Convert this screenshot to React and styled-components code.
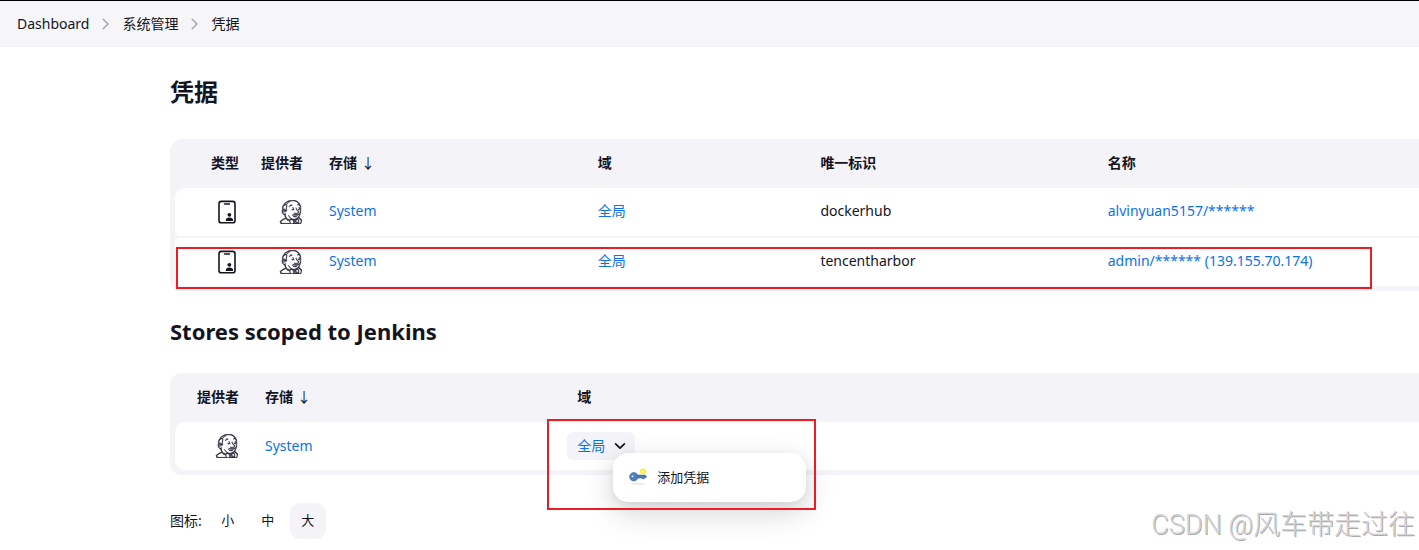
import React from "react";
import styled, { createGlobalStyle } from "styled-components";
import { SiJenkins } from "react-icons/si";

const GlobalStyle = createGlobalStyle`
  *, *::before, *::after { box-sizing: border-box; }
  body {
    margin: 0;
    background: #fff;
    color: #14141f;
    font: 14px/20px "Noto Sans", "Noto Sans CJK SC", sans-serif;
    overflow-x: hidden;
  }
  button { font: inherit; color: inherit; border: 0; background: none; cursor: pointer; }
`;

const Link = styled.a`
  color: ${(p) => (p.$plain ? "inherit" : "#0a72e8")};
  text-decoration: none;
`;

const Page = styled.div`
  position: relative;
  min-height: 100vh;
`;

const Breadcrumbs = styled.nav`
  display: flex;
  align-items: center;
  gap: 11px;
  height: 47px;
  padding: 0 17px;
  border-top: 1px solid #000;
  background: #f6f6f9;
`;

const Main = styled.main`
  padding: 31px 0 0 170px;
`;

const Title = styled.h1`
  margin: 0 0 33px;
  font-size: 24px;
  line-height: 28px;
  font-weight: 700;
`;

const Subtitle = styled.h2`
  margin: 26px 0 28px;
  font-size: 22px;
  line-height: 28px;
  font-weight: 700;
`;

const TablePanel = styled.div`
  position: relative;
  padding: 0 0 3px 5px;
  border-radius: 12px 0 0 12px;
  background: #f3f3f8;
`;

const Table = styled.table`
  width: 100%;
  table-layout: fixed;
  border-collapse: separate;
  border-spacing: 0 2px;
`;

const Col = styled.col`
  width: ${(p) => p.$w};
`;

const Th = styled.th`
  height: 45px;
  padding: ${(p) => (p.$end ? "0 11px 2px 0" : "0 0 2px 15px")};
  text-align: ${(p) => (p.$end ? "right" : "left")};
  font-weight: 700;
  white-space: nowrap;
`;

const Td = styled.td`
  position: relative;
  height: 48px;
  padding: ${(p) => (p.$end ? "0 11px 0 0" : "0 0 0 15px")};
  padding-bottom: ${(p) => (p.$text ? "2px" : "0")};
  text-align: ${(p) => (p.$end ? "right" : "left")};
  background: #fff;
  white-space: nowrap;

  svg { vertical-align: middle; }
`;

const Row = styled.tr`
  td:first-child { border-radius: 4px 0 0 4px; }
  &:first-child td:first-child { border-top-left-radius: 10px; }
  &:last-child td:first-child { border-bottom-left-radius: 10px; }
`;

const SortArrow = styled.span`
  margin-left: 4px;
  font-weight: 400;
`;

const DomainButton = styled.button`
  display: flex;
  align-items: center;
  gap: 9px;
  height: 28px;
  margin-left: -10px;
  padding: 0 9px 0 10px;
  border-radius: 6px;
  background: #f3f3f8;
  color: #0a72e8;
`;

const Menu = styled.div`
  position: absolute;
  z-index: 1;
  top: 31px;
  left: 51px;
  width: 193px;
  padding: 6px;
  border-radius: 15px;
  background: #fff;
  box-shadow: 0 10px 30px rgba(0, 0, 20, 0.18), 0 2px 8px rgba(0, 0, 20, 0.06);
`;

const MenuItem = styled.button`
  display: flex;
  align-items: center;
  gap: 10px;
  width: 100%;
  height: 37px;
  padding: 0 10px 2px;
  font-size: 13px;
`;

const RowHighlight = styled.div`
  position: absolute;
  left: 6px;
  right: 47px;
  bottom: 2px;
  height: 42px;
  border: 2px solid #ed1c24;
  pointer-events: none;
`;

const MenuHighlight = styled.div`
  position: absolute;
  z-index: 2;
  top: -3px;
  left: -15px;
  width: 269px;
  height: 91px;
  border: 2px solid #ed1c24;
  pointer-events: none;
`;

const IconSizes = styled.div`
  display: flex;
  align-items: center;
  gap: 4px;
  margin-top: 28px;
`;

const IconSizesLabel = styled.span`
  margin-right: 4px;
`;

const SizeButton = styled.button`
  width: 36px;
  height: 36px;
  padding: 0 0 2px;
  border-radius: 10px;
  font-size: 13px;
  background: ${(p) => (p.$active ? "#f3f3f8" : "transparent")};
`;

const Watermark = styled.div`
  position: absolute;
  right: 4px;
  bottom: 6px;
  font: 300 27px/38px Roboto, "Noto Sans CJK SC", sans-serif;
  color: #d4d4d4;
  text-shadow: 1px 1px 0 #a8a8a8;
`;

const Chevron = () => (
  <svg width="11" height="12" viewBox="0 0 11 12" fill="none" stroke="#a5a5b5" strokeWidth="1.5" strokeLinecap="round" strokeLinejoin="round" aria-hidden="true">
    <path d="M3.2 1.2 8 6l-4.8 4.8" />
  </svg>
);

const ChevronDown = () => (
  <svg width="12" height="12" viewBox="0 0 12 12" fill="none" stroke="#14141f" strokeWidth="1.7" strokeLinecap="round" strokeLinejoin="round" aria-hidden="true">
    <path d="M1.6 3.8 6 8.2l4.4-4.4" />
  </svg>
);

const CredentialIcon = () => (
  <svg width="24" height="24" viewBox="0 0 24 24" fill="none" aria-label="用户名和密码" role="img">
    <rect x="4" y="1.4" width="16" height="21.4" rx="2.4" stroke="#14141f" strokeWidth="1.6" />
    <path d="M9.5 4h5" stroke="#14141f" strokeWidth="1.4" strokeLinecap="round" />
    <circle cx="14.4" cy="14.8" r="1.9" fill="#14141f" />
    <path d="M10.8 21v-.9c0-1.7 1.3-2.6 3.6-2.6s3.6.9 3.6 2.6v.9z" fill="#14141f" />
  </svg>
);

const KeyIcon = () => (
  <svg width="18" height="18" viewBox="0 0 18 18" fill="none" aria-hidden="true">
    <ellipse cx="9" cy="15.8" rx="7" ry="1" fill="#e9e9e9" />
    <path d="M7 7h9.3l1.2 1.5-.9 1.5h-1.2l-.7 1h-1l-.7-.9H7z" fill="#4a7ab5" stroke="#3465a4" strokeWidth=".5" />
    <circle cx="4.8" cy="8.8" r="4.2" fill="#4f80bb" stroke="#3465a4" strokeWidth=".6" />
    <circle cx="3.5" cy="8.3" r="1.1" fill="#cbd9ea" />
    <circle cx="14" cy="3.6" r="2.2" fill="#fff9b0" stroke="#fcee2d" strokeWidth="1.6" />
  </svg>
);

const ProviderIcon = () => <SiJenkins size={24} color="#2b2b38" stroke="#2b2b38" strokeWidth={0.5} aria-label="Jenkins" />;

const credentials = [
  { id: "dockerhub", name: "alvinyuan5157/******" },
  { id: "tencentharbor", name: "admin/****** (139.155.70.174)" },
];

export default function App() {
  return (
    <Page>
      <GlobalStyle />
      <Breadcrumbs aria-label="Breadcrumb">
        <Link $plain href="#dashboard">Dashboard</Link>
        <Chevron />
        <Link $plain href="#manage">系统管理</Link>
        <Chevron />
        <Link $plain href="#credentials">凭据</Link>
      </Breadcrumbs>
      <Main>
        <Title>凭据</Title>
        <TablePanel>
          <Table>
            <colgroup>
              <Col $w="75px" />
              <Col $w="64px" />
              <Col $w="21.6%" />
              <Col $w="17.9%" />
              <Col $w="23.1%" />
              <Col />
            </colgroup>
            <thead>
              <tr>
                <Th $end>类型</Th>
                <Th $end>提供者</Th>
                <Th>存储<SortArrow>↓</SortArrow></Th>
                <Th>域</Th>
                <Th>唯一标识</Th>
                <Th>名称</Th>
              </tr>
            </thead>
            <tbody>
              {credentials.map((c) => (
                <Row key={c.id}>
                  <Td $end><CredentialIcon /></Td>
                  <Td $end><ProviderIcon /></Td>
                  <Td $text><Link href="#system">System</Link></Td>
                  <Td $text><Link href="#global">全局</Link></Td>
                  <Td $text>{c.id}</Td>
                  <Td $text><Link href={`#${c.id}`}>{c.name}</Link></Td>
                </Row>
              ))}
            </tbody>
          </Table>
          <RowHighlight />
        </TablePanel>
        <Subtitle>Stores scoped to Jenkins</Subtitle>
        <TablePanel>
          <Table>
            <colgroup>
              <Col $w="75px" />
              <Col $w="25.1%" />
              <Col />
            </colgroup>
            <thead>
              <tr>
                <Th $end>提供者</Th>
                <Th>存储<SortArrow>↓</SortArrow></Th>
                <Th>域</Th>
              </tr>
            </thead>
            <tbody>
              <Row>
                <Td $end><ProviderIcon /></Td>
                <Td><Link href="#system">System</Link></Td>
                <Td>
                  <DomainButton type="button" aria-haspopup="menu" aria-expanded="true">
                    全局
                    <ChevronDown />
                  </DomainButton>
                  <Menu role="menu">
                    <MenuItem type="button" role="menuitem">
                      <KeyIcon />
                      添加凭据
                    </MenuItem>
                  </Menu>
                  <MenuHighlight />
                </Td>
              </Row>
            </tbody>
          </Table>
        </TablePanel>
        <IconSizes role="group" aria-labelledby="icon-size-label">
          <IconSizesLabel id="icon-size-label">图标:</IconSizesLabel>
          <SizeButton type="button">小</SizeButton>
          <SizeButton type="button">中</SizeButton>
          <SizeButton type="button" $active aria-pressed="true">大</SizeButton>
        </IconSizes>
      </Main>
      <Watermark>CSDN @风车带走过往</Watermark>
    </Page>
  );
}
